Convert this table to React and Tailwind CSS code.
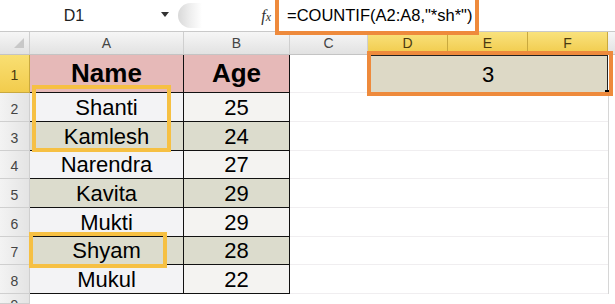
import React from 'react';

const font = { fontFamily: '"Liberation Sans", Arial, sans-serif' };

const cols = [
  { key: 'C', w: 'w-[78px]' },
  { key: 'D', w: 'w-[80px]', hl: true },
  { key: 'E', w: 'w-[80px]', hl: true },
  { key: 'F', w: 'w-[80px]', hl: true },
];

const people = [
  { n: 2, name: 'Shanti', age: 25, h: 'h-[29px]' },
  { n: 3, name: 'Kamlesh', age: 24, h: 'h-[29px]', shade: true },
  { n: 4, name: 'Narendra', age: 27, h: 'h-[28px]' },
  { n: 5, name: 'Kavita', age: 29, h: 'h-[29px]', shade: true },
  { n: 6, name: 'Mukti', age: 29, h: 'h-[29px]' },
  { n: 7, name: 'Shyam', age: 28, h: 'h-[28px]', shade: true },
  { n: 8, name: 'Mukul', age: 22, h: 'h-[29px]' },
];

function FormulaBar() {
  return (
    <div className="flex h-[32px] items-stretch bg-white border-b border-[#c9c9c9]">
      <div className="relative flex w-[178px] items-center justify-center">
        <span className="text-[16px] text-[#222] pr-[30px]">D1</span>
        <span className="absolute left-[161px] top-[12px] h-0 w-0 border-x-[4px] border-t-[5px] border-x-transparent border-t-[#333]" />
      </div>
      <div className="my-[3px] w-[24px] rounded-l-full bg-gradient-to-r from-[#d9d9d9] via-[#eeeeee] to-white" />
      <div className="flex w-[73px] items-center justify-end pr-[4px]">
        <span className="text-[16px] italic text-[#333]" style={{ fontFamily: '"Liberation Serif", serif' }}>
          f<span className="text-[12px]">x</span>
        </span>
      </div>
      <div className="flex flex-1 items-center">
        <span className="pl-[12px] text-[16.5px] text-black">=COUNTIF(A2:A8,"*sh*")</span>
      </div>
    </div>
  );
}

function HeaderRow() {
  return (
    <div className="flex h-[23px] bg-gradient-to-b from-[#f6f6f6] to-[#e2e2e2] border-b border-[#c4c4c4] text-[14px] text-[#444]">
      <div className="relative w-[30px] border-r border-[#cfcfcf]">
        <span className="absolute left-[14px] top-[6px] h-0 w-0 border-b-[10px] border-l-[10px] border-b-[#c8c8c8] border-l-transparent" />
      </div>
      <div className="flex w-[154px] items-center justify-center border-r border-[#cfcfcf]">A</div>
      <div className="flex w-[106px] items-center justify-center border-r border-[#cfcfcf]">B</div>
      {cols.map((c) => (
        <div
          key={c.key}
          className={
            c.hl
              ? `flex ${c.w} items-center justify-center border-r border-[#c9a93e] bg-gradient-to-b from-[#f9e27c] to-[#f1cb4a] text-[#4a3a10]`
              : `flex ${c.w} items-center justify-center border-r border-[#cfcfcf]`
          }
        >
          {c.key}
        </div>
      ))}
      <div className="flex-1" />
    </div>
  );
}

function RowHead({ n, active, clip }) {
  const base = clip
    ? 'flex w-[30px] items-start justify-center overflow-hidden pt-[4px] text-[14px] leading-none'
    : 'flex w-[30px] items-center justify-center pt-[4px] text-[14px]';
  return (
    <div
      className={
        active
          ? `${base} bg-gradient-to-b from-[#f9df72] to-[#f2cc4c] border-r border-b border-[#c9a93e] text-[#4a3a10]`
          : `${base} bg-gradient-to-r from-[#f3f3f3] to-[#e4e4e4] border-r border-b border-[#cfcfcf] text-[#444]`
      }
    >
      {n}
    </div>
  );
}

function EmptyCells() {
  return (
    <>
      {cols.map((c) => (
        <div key={c.key} className={`${c.w} border-b border-[#f0eef0]`} />
      ))}
      <div className="flex-1 border-l border-[#d6d6d6]" />
    </>
  );
}

export default function App() {
  return (
    <div className="relative h-[304px] w-[615px] overflow-hidden bg-white" style={font}>
      <FormulaBar />
      <HeaderRow />

      {/* row 1: headings and the merged result cell */}
      <div className="flex h-[38px]">
        <RowHead n={1} active />
        <div className="flex w-[154px] items-center justify-center bg-[#e6b9b8] border-r border-b border-[#111] text-[26px] font-bold text-black">
          Name
        </div>
        <div className="flex w-[106px] items-center justify-center bg-[#e6b9b8] border-r border-b border-[#111] text-[26px] font-bold text-black">
          Age
        </div>
        <div className="w-[78px] border-b border-[#f0eef0]" />
        <div className="relative flex w-[240px] items-center justify-center bg-[#ddd9c6] border border-[#222] text-[22px] text-black">
          3
          <span className="absolute -right-[3px] -bottom-[3px] h-[5px] w-[5px] bg-black" />
        </div>
        <div className="flex-1" />
      </div>

      {people.map((p) => (
        <div key={p.n} className={`flex ${p.h}`}>
          <RowHead n={p.n} />
          <div
            className={`flex w-[154px] items-center justify-center border-r border-b border-[#111] text-[22px] text-black ${
              p.shade ? 'bg-[#dcdccd]' : 'bg-[#f3f3f5]'
            }`}
          >
            {p.name}
          </div>
          <div
            className={`flex w-[106px] items-center justify-center border-r border-b border-[#111] text-[22px] text-black ${
              p.shade ? 'bg-[#dcdccd]' : 'bg-[#f4f3f1]'
            }`}
          >
            {p.age}
          </div>
          <EmptyCells />
        </div>
      ))}

      <div className="flex h-[10px]">
        <RowHead n={9} clip />
        <div className="w-[154px]" />
      </div>

      {/* callouts drawn over the sheet */}
      <div className="pointer-events-none absolute left-[275px] top-[-4px] h-[39px] w-[204px] border-[4px] border-[#ee8a3c]" />
      <div className="pointer-events-none absolute left-[367px] top-[51px] h-[45px] w-[246px] border-[4px] border-[#ee8a3c]" />
      <div className="pointer-events-none absolute left-[32px] top-[85px] h-[67px] w-[139px] border-[4px] border-[#f6c043]" />
      <div className="pointer-events-none absolute left-[29px] top-[232px] h-[36px] w-[138px] border-[4px] border-[#f6c043]" />
    </div>
  );
}
